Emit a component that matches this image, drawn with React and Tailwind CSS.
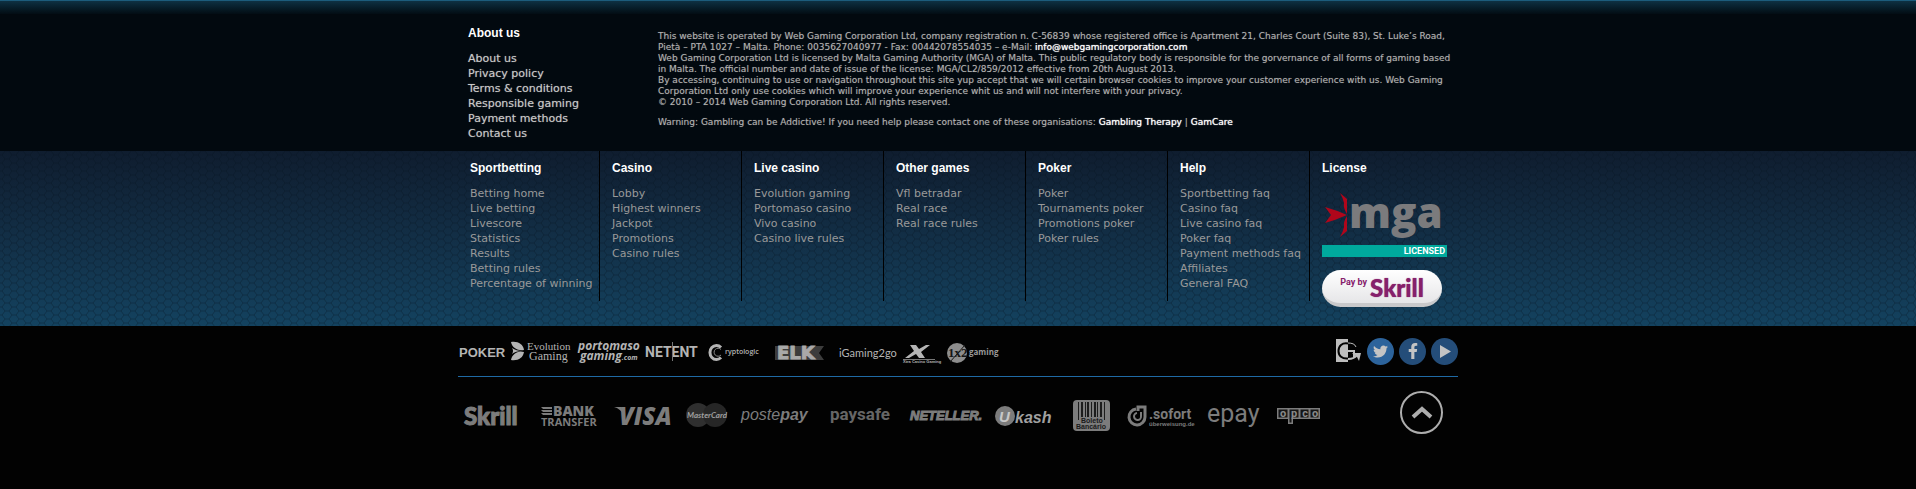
import React from "react";
import { FaTwitter, FaFacebookF } from "react-icons/fa";

const ABOUT = [
  "About us",
  "Privacy policy",
  "Terms & conditions",
  "Responsible gaming",
  "Payment methods",
  "Contact us",
];

const COLUMNS = [
  {
    title: "Sportbetting",
    links: ["Betting home", "Live betting", "Livescore", "Statistics", "Results", "Betting rules", "Percentage of winning"],
  },
  { title: "Casino", links: ["Lobby", "Highest winners", "Jackpot", "Promotions", "Casino rules"] },
  { title: "Live casino", links: ["Evolution gaming", "Portomaso casino", "Vivo casino", "Casino live rules"] },
  { title: "Other games", links: ["Vfl betradar", "Real race", "Real race rules"] },
  { title: "Poker", links: ["Poker", "Tournaments poker", "Promotions poker", "Poker rules"] },
  {
    title: "Help",
    links: ["Sportbetting faq", "Casino faq", "Live casino faq", "Poker faq", "Payment methods faq", "Affiliates", "General FAQ"],
  },
];

const HEADING = "font-['Liberation_Sans',Arial,sans-serif] text-[12px] leading-[15px] font-bold text-white";
const LINKS = "mt-2.5 text-[11px] leading-[15px] whitespace-nowrap";
const STRONG = "text-white [text-shadow:0_0_1px_#fff]";

function LinkList({ title, links, tone }) {
  return (
    <nav aria-label={title}>
      <h2 className={HEADING}>{title}</h2>
      <ul className={`${LINKS} ${tone}`}>
        {links.map((label) => (
          <li key={label}>
            <a href="#" className="hover:text-white">{label}</a>
          </li>
        ))}
      </ul>
    </nav>
  );
}

function Honeycomb() {
  return (
    <svg className="absolute inset-0 h-full w-full" aria-hidden="true">
      <defs>
        <pattern id="honeycomb" width="14" height="8" patternUnits="userSpaceOnUse">
          <path
            d="M0 4H2L5 0H9L12 4H14M2 4L5 8H9L12 4"
            fill="none"
            stroke="#04101c"
            strokeOpacity="0.32"
            strokeWidth="1"
          />
        </pattern>
      </defs>
      <rect width="100%" height="100%" fill="url(#honeycomb)" />
    </svg>
  );
}

function Logo({ label, width, height, children }) {
  return (
    <a href="#" aria-label={label} className="block shrink-0">
      <svg width={width} height={height} viewBox={`0 0 ${width} ${height}`} fill="currentColor" className="overflow-visible">
        {children}
      </svg>
    </a>
  );
}

const SANS = "'Liberation Sans', Arial, sans-serif";
const SERIF = "'Liberation Serif', serif";
const OPEN = "'Open Sans', sans-serif";
const LATO = "Lato, sans-serif";
const ROBOTO = "Roboto, sans-serif";

function Partners() {
  return (
    <div className="flex text-[#b4b4b4]">
      <Logo label="Poker" width={51} height={30}>
        <text x="1" y="21" fontFamily={SANS} fontSize="13" fontWeight="700">POKER</text>
      </Logo>
      <Logo label="Evolution Gaming" width={67} height={30}>
        <path d="M2 6C9 5 14 8 15 14C9 15 3 12 2 6Z" />
        <path d="M2 24C9 25 14 22 15 16C9 14 3 18 2 24Z" />
        <path d="M3 12C6 14 9 15 13 15C9 15 5 16 3 18Q5 15 3 12Z" />
        <text x="18" y="14" fontFamily={SERIF} fontSize="11">Evolution</text>
        <text x="20" y="24" fontFamily={SERIF} fontSize="12">Gaming</text>
      </Logo>
      <Logo label="Portomaso gaming.com" width={67} height={30}>
        <g fontFamily={OPEN} fontWeight="700" fontStyle="italic">
          <text x="2" y="14" fontSize="12">portomaso</text>
          <text x="4" y="24" fontSize="12">
            gaming<tspan fontSize="7">.com</tspan>
          </text>
        </g>
      </Logo>
      <Logo label="NetEnt" width={60} height={30}>
        <text x="2" y="21" fontFamily={ROBOTO} fontSize="14" fontWeight="700">NETENT</text>
        <path d="M29 6H30V25H29Z" fill="#777" />
      </Logo>
      <Logo label="Cryptologic" width={64} height={30}>
        <path d="M18 11.500A6.500 7 0 1 0 18 21.500" fill="none" stroke="currentColor" strokeWidth="3" />
        <path d="M18 13.500A4 4 0 1 0 18 19" fill="none" stroke="#888" strokeWidth="1" />
        <text x="22" y="18" fontFamily={OPEN} fontSize="7" fontWeight="600">ryptologic</text>
      </Logo>
      <Logo label="ELK" width={65} height={30}>
        <path d="M8 10H57L52 17L57 24H8Z" fill="#3c3c3c" />
        <text x="10" y="23" fontFamily="'DejaVu Sans', sans-serif" fontSize="18" fontWeight="700" fill="#a9a9a9" stroke="#a9a9a9" strokeWidth="1">ELK</text>
      </Logo>
      <Logo label="iGaming2go" width={65} height={30}>
        <text x="7" y="21" fontFamily={LATO} fontSize="11">iGaming2go</text>
      </Logo>
      <Logo label="XPG" width={44} height={30}>
        <path d="M13 9H19L22 13L29 9H33L24 16L28 22H22L19 18L12 22H8L17 15Z" />
        <path d="M6 23H38V24H6Z" fill="#777" />
        <text x="6" y="27" fontFamily={SANS} fontSize="4" fontWeight="700">Xtra Casino Gaming</text>
      </Logo>
      <Logo label="1x2 gaming" width={64} height={30}>
        <circle cx="16" cy="17" r="10" fill="#8d8d8d" />
        <path d="M9 26L24 9" stroke="#151515" strokeWidth="1" />
        <text x="7" y="21" fontFamily={SERIF} fontSize="13" fontWeight="700" fill="#151515">1x2</text>
        <text x="28" y="19" fontFamily={OPEN} fontSize="8" fontWeight="700" fill="#999">gaming</text>
      </Logo>
    </div>
  );
}

function Social() {
  return (
    <div className="flex items-center gap-[5px]">
      <a href="#" aria-label="Web Gaming" className="block text-[#bdbdbd]">
        <svg width="26" height="24" viewBox="0 0 26 24">
          <path d="M0 0H12V23H0Z" fill="currentColor" />
          <path d="M12 4.500C6 3.500 2.500 7 2.500 12C2.500 17 6 20 12 19.500" fill="none" stroke="#020202" strokeWidth="2" />
          <path d="M12 4C16 4 19 5 20 8" fill="none" stroke="currentColor" strokeWidth="1" />
          <path d="M12 12H18V18M12 20C16 20 19 19 21 16" fill="none" stroke="currentColor" strokeWidth="2" />
          <path d="M16 14H25L23 22L21 18Z" fill="currentColor" />
        </svg>
      </a>
      <a href="#" aria-label="Twitter" className="flex size-[27px] items-center justify-center rounded-full bg-[#2c639b] text-[#c4c4c4]">
        <FaTwitter size={15} />
      </a>
      <a href="#" aria-label="Facebook" className="flex size-[27px] items-center justify-center rounded-full bg-[#244d79] text-[#c4c4c4]">
        <FaFacebookF size={16} />
      </a>
      <a href="#" aria-label="YouTube" className="flex size-[27px] items-center justify-center rounded-full bg-[#244d79] text-[#c4c4c4]">
        <svg width="27" height="27" viewBox="0 0 27 27" fill="currentColor">
          <path d="M9 7L20 13.500L9 20Z" />
        </svg>
      </a>
    </div>
  );
}

function Payments() {
  return (
    <div className="flex text-[#7c7c7c]">
      <Logo label="Skrill" width={72} height={40}>
        <text x="6" y="30" fontFamily={LATO} fontSize="24" fontWeight="900" stroke="currentColor" strokeWidth="1">Skrill</text>
      </Logo>
      <Logo label="Bank transfer" width={74} height={40}>
        <path d="M11 12H22V14H13ZM11 15H22V17H13ZM11 18H22V20H13Z" />
        <text x="23" y="21" fontFamily={OPEN} fontSize="14" fontWeight="800">BANK</text>
        <text x="11" y="31" fontFamily={OPEN} fontSize="11" fontWeight="700">TRANSFER</text>
      </Logo>
      <Logo label="Visa" width={74} height={40}>
        <path d="M10 12H17L20 20C18 16 14 13 10 12Z" />
        <text x="15" y="30" fontFamily={OPEN} fontSize="24" fontWeight="800" fontStyle="italic">VISA</text>
      </Logo>
      <Logo label="MasterCard" width={56} height={40}>
        <circle cx="20" cy="20" r="12" fill="#2f2f2f" />
        <circle cx="37" cy="20" r="12" fill="#262626" />
        <text x="9" y="23" fontFamily={LATO} fontSize="8" fontWeight="700" fontStyle="italic" fill="#a0a0a0">MasterCard</text>
      </Logo>
      <Logo label="Postepay" width={86} height={40}>
        <text x="7" y="25" fontFamily={SANS} fontSize="16" fontStyle="italic">
          poste<tspan fontWeight="700">pay</tspan>
        </text>
      </Logo>
      <Logo label="Paysafe" width={80} height={40}>
        <text x="10" y="25" fontFamily={ROBOTO} fontSize="17" fontWeight="700" fill="#666">paysafe</text>
      </Logo>
      <Logo label="Neteller" width={88} height={40}>
        <text x="10" y="25" fontFamily={SANS} fontSize="13" fontWeight="700" fontStyle="italic" stroke="currentColor" strokeWidth="1">NETELLER.</text>
      </Logo>
      <Logo label="Ukash" width={75} height={40}>
        <circle cx="17" cy="21" r="10" />
        <text x="11" y="27" fontFamily={SANS} fontSize="15" fontWeight="700" fontStyle="italic" fill="#c8c8c8">U</text>
        <text x="27" y="28" fontFamily={SANS} fontSize="16" fontWeight="700" fontStyle="italic" fill="#a0a0a0">kash</text>
      </Logo>
      <Logo label="Boleto Bancário" width={57} height={40}>
        <rect x="10" y="5" width="37" height="31" rx="4" />
        <path
          d="M15 7H16V25H15ZM18 7H20V22H18ZM22 7H23V22H22ZM24 7H26V22H24ZM28 7H29V22H28ZM31 7H33V22H31ZM34 7H35V22H34ZM37 7H39V22H37ZM41 7H42V25H41Z"
          fill="#1c1c1c"
        />
        <g fontFamily={SANS} fontSize="7" fontWeight="700" fill="#1a1a1a">
          <text x="18" y="28">Boleto</text>
          <text x="13" y="34">Bancário</text>
        </g>
      </Logo>
      <Logo label="Sofort Überweisung" width={80} height={40}>
        <path d="M16 14A8 8 0 1 0 25 22V12H18V16" fill="none" stroke="currentColor" strokeWidth="3" />
        <path d="M17 18A3.500 3.500 0 1 0 21 21V17" fill="none" stroke="currentColor" strokeWidth="2" />
        <text x="29" y="24" fontFamily={ROBOTO} fontSize="14" fontWeight="700">.sofort</text>
        <text x="29" y="31" fontFamily={SANS} fontSize="6" fontWeight="700">überweisung.de</text>
      </Logo>
      <Logo label="epay" width={68} height={40}>
        <text x="7" y="27" fontFamily={ROBOTO} fontSize="25">epay</text>
      </Logo>
      <Logo label="apco" width={60} height={40}>
        <path d="M9 13H52V24H25V29H20V24H9Z" />
        <path d="M10.500 14.500H19.500V22.500H10.500ZM21.500 14.500H30.500V22.500H23.500V27.500H21.500ZM32.500 14.500H40.500V22.500H32.500ZM42.500 14.500H50.500V22.500H42.500Z" fill="#151515" />
        <g fontFamily={ROBOTO} fontSize="11" fontWeight="700" fill="#8a8a8a" textAnchor="middle">
          <text x="15" y="22">o</text>
          <text x="26" y="22">p</text>
          <text x="37" y="22">c</text>
          <text x="47" y="22">o</text>
        </g>
      </Logo>
    </div>
  );
}

function License() {
  return (
    <section aria-label="License" className="pt-2.5 pl-3">
      <h2 className={HEADING}>License</h2>
      <a href="#" aria-label="MGA licensed" className="mt-2.5 block w-[125px]">
        <svg width="125" height="59" viewBox="0 0 125 59" className="overflow-visible">
          <g fill="#b0061b">
            <path d="M18 7L25 13V28Q21 22 22 17Q21 12 18 7Z" />
            <path d="M18 51L25 45V30Q21 36 22 41Q21 46 18 51Z" />
            <path d="M3 21Q14 24 25 29Q14 34 3 37L9 29Z" />
          </g>
          <text x="27" y="42" fontFamily={OPEN} fontSize="42" fontWeight="800" fill="#7b7b7d">mga</text>
        </svg>
        <span className="block bg-[#00a99d] pr-0.5 text-right font-['Roboto',sans-serif] text-[9px] leading-[12px] font-bold text-white">
          LICENSED
        </span>
      </a>
      <button
        type="button"
        className="mt-[13px] flex h-[37px] w-[120px] justify-center gap-[3px] rounded-full border-b-4 border-[#c9c9cb] bg-linear-to-b from-white to-[#e6e6e8] text-[#86206b]"
      >
        <span className="pt-1.5 font-['Roboto',sans-serif] text-[9px] leading-[12px] font-bold">Pay by</span>
        <span className="pt-1 font-['Lato',sans-serif] text-[24px] leading-[27px] font-black [text-shadow:0_0_1px_#86206b]">Skrill</span>
      </button>
    </section>
  );
}

export default function App() {
  return (
    <footer className="min-h-screen bg-[#020202] font-['DejaVu_Sans',Verdana,sans-serif]">
      <div className="border-t border-[#1c5c7c] bg-[#02090f]">
        <div className="h-[13px] bg-linear-to-b from-[#0e3143] to-[#030d14]" />
        <div className="mx-auto flex max-w-[1000px] pt-3 pb-2.5">
          <div className="w-[200px] shrink-0 pl-2.5">
            <LinkList title="About us" links={ABOUT} tone="text-[#c8c8c8] [text-shadow:0_0_1px_#777]" />
          </div>
          <div className="min-w-0 flex-1 pt-[5px] text-[9px] leading-[11px] text-[#b2b2b2] [text-shadow:0_0_1px_#555]">
            <p>
              This website is operated by Web Gaming Corporation Ltd, company registration n. C-56839 whose registered
              office is Apartment 21, Charles Court (Suite 83), St. Luke’s Road, Pietà – PTA 1027 – Malta. Phone:
              0035627040977 - Fax: 00442078554035 – e-Mail:{" "}
              <a href="#" className={STRONG}>info@webgamingcorporation.com</a>
            </p>
            <p>
              Web Gaming Corporation Ltd is licensed by Malta Gaming Authority (MGA) of Malta. This public regulatory
              body is responsible for the gorvernance of all forms of gaming based in Malta. The official number and
              date of issue of the license: MGA/CL2/859/2012 effective from 20th August 2013.
            </p>
            <p>
              By accessing, continuing to use or navigation throughout this site yup accept that we will certain
              browser cookies to improve your customer experience with us. Web Gaming Corporation Ltd only use cookies
              which will improve your experience whit us and will not interfere with your privacy.
            </p>
            <p>© 2010 – 2014 Web Gaming Corporation Ltd. All rights reserved.</p>
            <p className="mt-[9px]">
              Warning: Gambling can be Addictive! If you need help please contact one of these organisations:{" "}
              <a href="#" className={STRONG}>Gambling Therapy</a> |{" "}
              <a href="#" className={STRONG}>GamCare</a>
            </p>
          </div>
        </div>
      </div>

      <div className="relative bg-linear-to-b from-[#0f1d2f] to-[#13425f]">
        <Honeycomb />
        <div className="relative mx-auto grid max-w-[1000px] grid-cols-[repeat(6,142px)_1fr] items-start pb-[19px]">
          {COLUMNS.map((column) => (
            <div key={column.title} className="min-h-[150px] border-r border-black pt-2.5 pl-3">
              <LinkList title={column.title} links={column.links} tone="text-[#999]" />
            </div>
          ))}
          <License />
        </div>
      </div>

      <div className="mx-auto max-w-[1000px]">
        <div className="flex items-center justify-between border-b border-[#1f6aa5] py-2.5">
          <Partners />
          <Social />
        </div>
        <div className="flex items-start justify-between pt-3.5 pr-[15px]">
          <div className="pt-1">
            <Payments />
          </div>
          <button
            type="button"
            aria-label="Back to top"
            className="flex size-[43px] shrink-0 items-center justify-center rounded-full border-2 border-[#adadad] text-[#adadad]"
          >
            <svg width="22" height="16" viewBox="0 0 22 16" fill="none" stroke="currentColor" strokeWidth="4">
              <path d="M2 12L11 4L20 12" />
            </svg>
          </button>
        </div>
      </div>
    </footer>
  );
}
